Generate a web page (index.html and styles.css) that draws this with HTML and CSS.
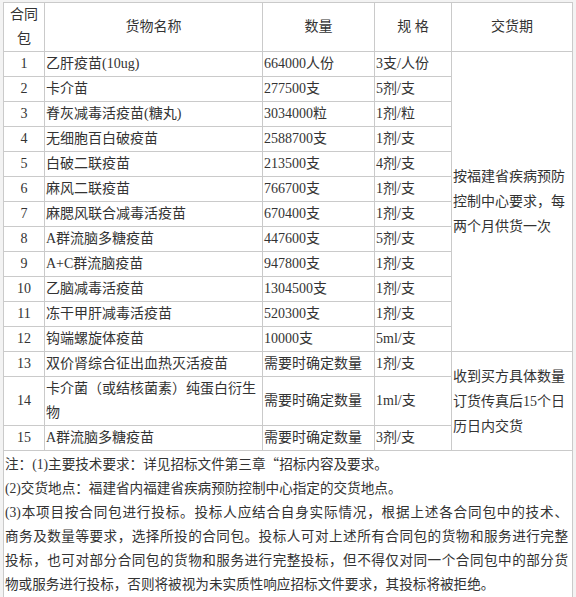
FILE: index.html
```html
<!DOCTYPE html>
<html lang="zh">
<head>
<meta charset="utf-8">
<title>合同包</title>
<link rel="stylesheet" href="styles.css">
</head>
<body>
<table class="goods">
  <colgroup>
    <col class="c-no">
    <col class="c-name">
    <col class="c-qty">
    <col class="c-spec">
    <col class="c-date">
  </colgroup>
  <thead>
    <tr class="head">
      <th class="no">合同包</th>
      <th>货物名称</th>
      <th>数量</th>
      <th>规 格</th>
      <th>交货期</th>
    </tr>
  </thead>
  <tbody>
    <tr><td class="no">1</td><td>乙肝疫苗(10ug)</td><td>664000人份</td><td>3支/人份</td>
      <td class="date" rowspan="12">按福建省疾病预防控制中心要求，每两个月供货一次</td></tr>
    <tr><td class="no">2</td><td>卡介苗</td><td>277500支</td><td>5剂/支</td></tr>
    <tr><td class="no">3</td><td>脊灰减毒活疫苗(糖丸)</td><td>3034000粒</td><td>1剂/粒</td></tr>
    <tr><td class="no">4</td><td>无细胞百白破疫苗</td><td>2588700支</td><td>1剂/支</td></tr>
    <tr><td class="no">5</td><td>白破二联疫苗</td><td>213500支</td><td>4剂/支</td></tr>
    <tr><td class="no">6</td><td>麻风二联疫苗</td><td>766700支</td><td>1剂/支</td></tr>
    <tr><td class="no">7</td><td>麻腮风联合减毒活疫苗</td><td>670400支</td><td>1剂/支</td></tr>
    <tr><td class="no">8</td><td>A群流脑多糖疫苗</td><td>447600支</td><td>5剂/支</td></tr>
    <tr><td class="no">9</td><td>A+C群流脑疫苗</td><td>947800支</td><td>1剂/支</td></tr>
    <tr><td class="no">10</td><td>乙脑减毒活疫苗</td><td>1304500支</td><td>1剂/支</td></tr>
    <tr><td class="no">11</td><td>冻干甲肝减毒活疫苗</td><td>520300支</td><td>1剂/支</td></tr>
    <tr><td class="no">12</td><td>钩端螺旋体疫苗</td><td>10000支</td><td>5ml/支</td></tr>
    <tr><td class="no">13</td><td>双价肾综合征出血热灭活疫苗</td><td>需要时确定数量</td><td>1剂/支</td>
      <td class="date" rowspan="3">收到买方具体数量订货传真后15个日历日内交货</td></tr>
    <tr><td class="no">14</td><td>卡介菌（或结核菌素）纯蛋白衍生物</td><td>需要时确定数量</td><td>1ml/支</td></tr>
    <tr><td class="no">15</td><td>A群流脑多糖疫苗</td><td>需要时确定数量</td><td>3剂/支</td></tr>
    <tr>
      <td class="note" colspan="5">
        <div class="line">注：(1)主要技术要求：详见招标文件第三章<span class="cjk">“</span>招标内容及要求。</div>
        <div class="line">(2)交货地点：福建省内福建省疾病预防控制中心指定的交货地点。</div>
        <div class="line full">(3)本项目按合同包进行投标。投标人应结合自身实际情况，根据上述各合同包中的技术、</div>
        <div class="line full">商务及数量等要求，选择所投的合同包。投标人可对上述所有合同包的货物和服务进行完整</div>
        <div class="line full">投标，也可对部分合同包的货物和服务进行完整投标，但不得仅对同一个合同包中的部分货</div>
        <div class="line">物或服务进行投标，否则将被视为未实质性响应招标文件要求，其投标将被拒绝。</div>
      </td>
    </tr>
  </tbody>
</table>
</body>
</html>
```

FILE: styles.css
```css
html, body {
  margin: 0;
  padding: 0;
  background: #f3f3f3;
}
body {
  padding: 2px 0 0 3px;
  font-family: "Liberation Serif", "Noto Sans CJK SC", serif;
  color: #333;
}
.goods {
  border-collapse: collapse;
  table-layout: fixed;
  width: 569px;
  background: #fff;
  font-size: 14px;
  line-height: 24px;
}
.c-no { width: 41px; }
.c-name { width: 218px; }
.c-qty { width: 112px; }
.c-spec { width: 77px; }
.c-date { width: 121px; }
.goods th,
.goods td {
  border: 1px solid #cacaca;
  padding: 0 0 0 1px;
  vertical-align: middle;
  text-align: left;
  font-weight: normal;
  overflow: hidden;
}
.goods th {
  text-align: center;
  padding: 0 4px;
}
.goods th.no {
  padding: 0 6px;
}
.goods td.no {
  text-align: center;
  padding: 0;
}
.goods td.date {
  line-height: 25px;
  padding: 0 0 0 1px;
}
.goods td.note {
  font-size: 13.6px;
  line-height: 24px;
  padding: 0 4px 0 1px;
}
.cjk {
  font-family: "Noto Sans CJK SC", sans-serif;
}
.line {
  white-space: nowrap;
}
.line.full {
  text-align: justify;
  text-align-last: justify;
  white-space: normal;
}
```
